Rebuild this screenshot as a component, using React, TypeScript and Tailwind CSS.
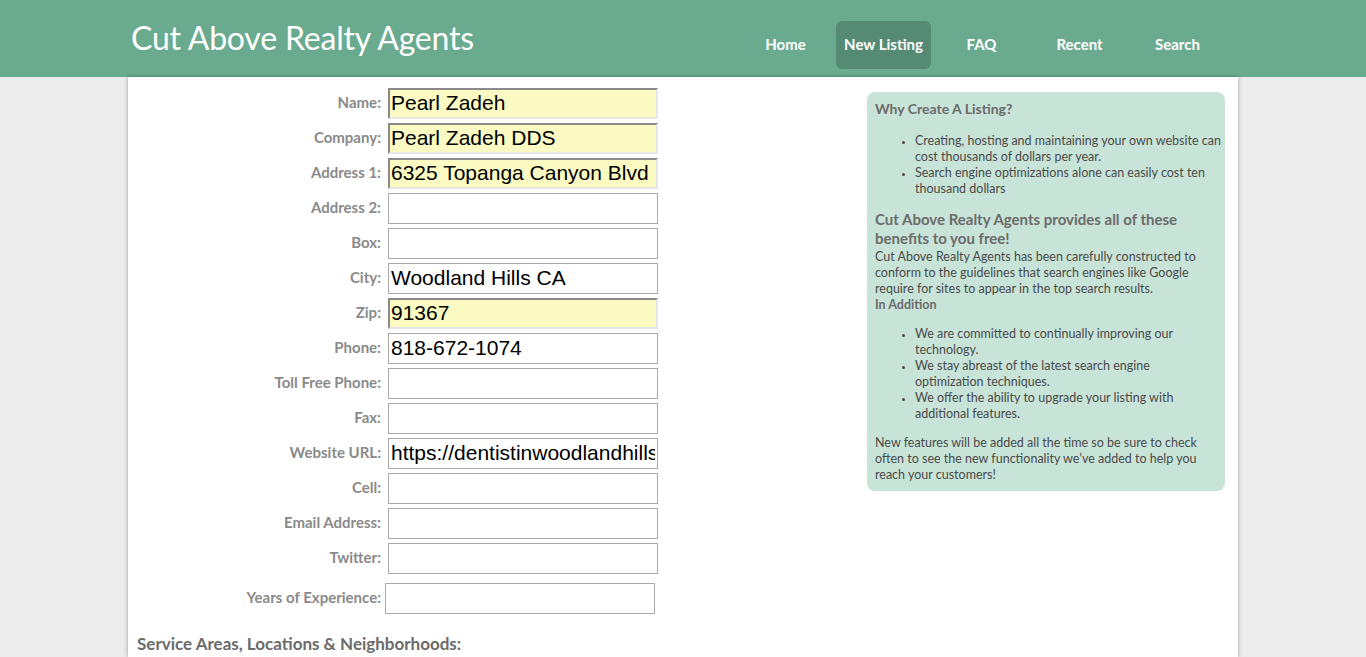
import React from 'react';

interface Field {
  label: string;
  value?: string;
  filled?: boolean;
}

const fields: Field[] = [
  { label: 'Name:', value: 'Pearl Zadeh', filled: true },
  { label: 'Company:', value: 'Pearl Zadeh DDS', filled: true },
  { label: 'Address 1:', value: '6325 Topanga Canyon Blvd', filled: true },
  { label: 'Address 2:' },
  { label: 'Box:' },
  { label: 'City:', value: 'Woodland Hills CA' },
  { label: 'Zip:', value: '91367', filled: true },
  { label: 'Phone:', value: '818-672-1074' },
  { label: 'Toll Free Phone:' },
  { label: 'Fax:' },
  { label: 'Website URL:', value: 'https://dentistinwoodlandhills.com' },
  { label: 'Cell:' },
  { label: 'Email Address:' },
  { label: 'Twitter:' },
];

const navItems = ['Home', 'New Listing', 'FAQ', 'Recent', 'Search'];

const font = { fontFamily: 'Lato, "Open Sans", sans-serif' };
const inputFont = { fontFamily: '"Liberation Sans", Arial, sans-serif' };

const App: React.FC = () => {
  return (
    <div className="min-h-screen bg-[#ececec]" style={font}>
      <header className="bg-[#6aab90] h-[77px]">
        <div className="w-[1110px] mx-auto flex items-start justify-between pl-[3px] pr-[13px]">
          <h1 className="text-[32px] text-white leading-none mt-[22px] tracking-[-0.2px]">
            Cut Above Realty Agents
          </h1>
          <nav className="flex gap-[3px] mt-[21px]">
            {navItems.map(item => (
              <a
                key={item}
                className={`w-[95px] h-[48px] flex items-center justify-center rounded-[6px] text-white text-[15px] font-bold pb-[1px] ${
                  item === 'New Listing' ? 'bg-[#558a74]' : ''
                }`}
              >
                {item}
              </a>
            ))}
          </nav>
        </div>
      </header>

      <main className="w-[1110px] mx-auto bg-white shadow-[0_0_4px_rgba(0,0,0,0.35)] min-h-[580px] pr-[13px]">
        <div className="flex justify-between">
          <div className="pt-[11px]">
            <div className="flex flex-col gap-[4px]">
              {fields.map(f => (
                <div key={f.label} className="flex items-center">
                  <label className="w-[260px] text-right pr-[7px] text-[15px] font-bold text-[#8a8a8a] -mt-[3px]">
                    {f.label}
                  </label>
                  <input
                    readOnly
                    value={f.value ?? ''}
                    className={`w-[270px] h-[31px] text-[21px] text-black outline-none pb-[2px] ${
                      f.filled
                        ? 'bg-[#fafac2] px-[1px] border-2 border-t-[#8a8a8a] border-l-[#8a8a8a] border-r-[#e6e6e6] border-b-[#e6e6e6]'
                        : 'bg-white border border-[#a9a9a9] px-[2px]'
                    }`}
                    style={inputFont}
                  />
                </div>
              ))}
            </div>
            <div className="flex items-center mt-[9px]">
              <label className="w-[257px] text-right pr-[4px] text-[15px] font-bold text-[#8a8a8a] -mt-[3px]">
                Years of Experience:
              </label>
              <input
                readOnly
                className="w-[270px] h-[31px] border border-[#a9a9a9] bg-white outline-none"
              />
            </div>
            <h2 className="mt-[17px] pl-[9px] text-[17px] font-bold text-[#6b6b6b]">
              Service Areas, Locations &amp; Neighborhoods:
            </h2>
          </div>

          <aside className="w-[358px] mt-[15px] self-start bg-[#c8e4d8] rounded-[8px] pl-[8px] pr-[4px] pt-[7px] pb-[8px] text-[12.5px] leading-[16px] text-[#4a4a4a]">
            <h3 className="text-[14px] font-bold text-[#6b6b6b] leading-[20px]">Why Create A Listing?</h3>
            <ul className="list-disc pl-[40px] mt-[14px] marker:text-[10px]">
              <li>Creating, hosting and maintaining your own website can cost thousands of dollars per year.</li>
              <li>Search engine optimizations alone can easily cost ten thousand dollars</li>
            </ul>
            <h3 className="mt-[13px] text-[15px] leading-[19px] font-bold text-[#6b6b6b]">
              Cut Above Realty Agents provides all of these benefits to you free!
            </h3>
            <p className="mt-[1px]">
              Cut Above Realty Agents has been carefully constructed to conform to the guidelines that search
              engines like Google require for sites to appear in the top search results.
            </p>
            <p className="font-bold text-[#6b6b6b]">In Addition</p>
            <ul className="list-disc pl-[40px] mt-[13px] marker:text-[10px]">
              <li>We are committed to continually improving our technology.</li>
              <li>We stay abreast of the latest search engine optimization techniques.</li>
              <li>We offer the ability to upgrade your listing with additional features.</li>
            </ul>
            <p className="mt-[13px]">
              New features will be added all the time so be sure to check often to see the new functionality
              we&rsquo;ve added to help you reach your customers!
            </p>
          </aside>
        </div>
      </main>
    </div>
  );
};

export default App;
